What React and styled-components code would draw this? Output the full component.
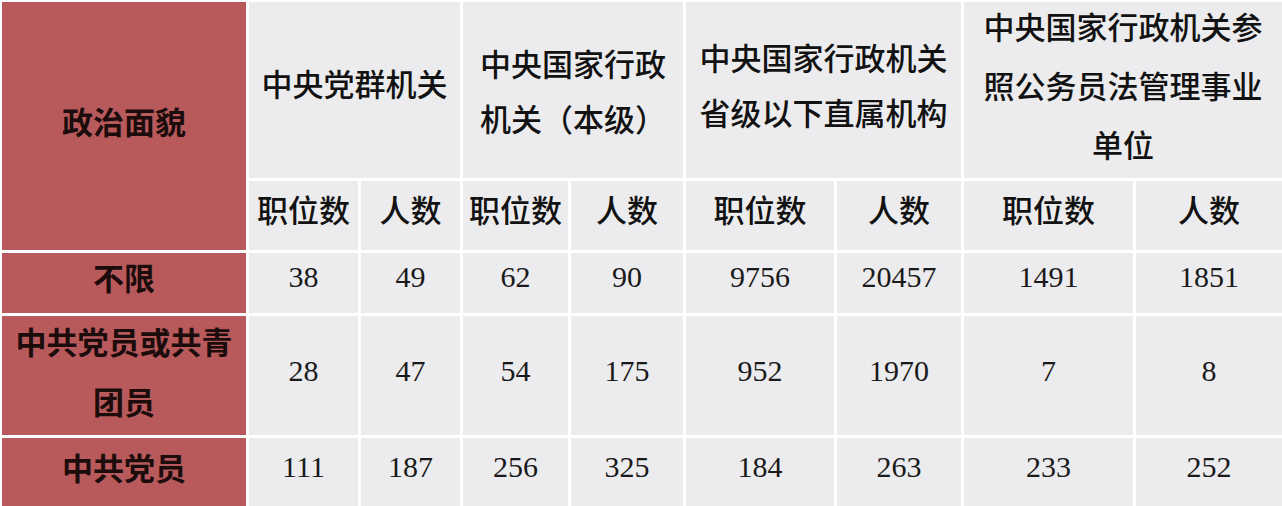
import React from "react";
import styled, { createGlobalStyle } from "styled-components";

const GlobalStyle = createGlobalStyle`
  html, body {
    margin: 0;
    padding: 0;
    background: #ffffff;
    overflow: hidden;
  }
`;

const Sheet = styled.div`
  display: grid;
  grid-template-columns: 244px 109px 99px 105px 112px 148px 124px 169px 146px;
  grid-template-rows: 176px 69px 60px 119px 70px;
  gap: 3px;
  padding: 2px 0 0 2px;
  width: 1282px;
  box-sizing: border-box;
  background: #ffffff;
  font-family: "Noto Sans CJK SC", "Noto Sans", sans-serif;
`;

const Cell = styled.div`
  display: flex;
  align-items: center;
  justify-content: center;
  text-align: center;
  box-sizing: border-box;
  overflow: visible;
  background: ${(p) => (p.$red ? "#b85a5c" : "#ececee")};
  color: ${(p) => (p.$red ? "#1c0c0c" : "#121212")};
  padding-bottom: ${(p) => p.$lift || 0}px;
`;

const Corner = styled(Cell)`
  grid-row: span 2;
  font-size: 31px;
  font-weight: 700;
  padding-bottom: 12px;
`;

const GroupHead = styled(Cell)`
  grid-column: span 2;
  font-size: 31px;
  font-weight: 500;
  line-height: ${(p) => p.$lh || 56}px;
`;

const SubHead = styled(Cell)`
  font-size: 31px;
  font-weight: 500;
  padding-bottom: 14px;
`;

const RowHead = styled(Cell)`
  font-size: 31px;
  font-weight: 700;
  line-height: 60px;
`;

const Num = styled(Cell)`
  font-family: "Liberation Serif", "DejaVu Serif", serif;
  font-size: 30px;
  color: #1a1a1a;
`;

const groups = [
  { lines: ["中央党群机关"], lift: 14 },
  { lines: ["中央国家行政", "机关（本级）"], lift: 0, lh: 55 },
  { lines: ["中央国家行政机关", "省级以下直属机构"], lift: 12, lh: 55 },
  { lines: ["中央国家行政机关参", "照公务员法管理事业", "单位"], lift: 12, lh: 59 },
];

const rows = [
  { head: ["不限"], values: [38, 49, 62, 90, 9756, 20457, 1491, 1851], lift: 12 },
  { head: ["中共党员或共青", "团员"], values: [28, 47, 54, 175, 952, 1970, 7, 8], lift: 10 },
  { head: ["中共党员"], values: [111, 187, 256, 325, 184, 263, 233, 252], lift: 12 },
];

function Lines({ lines }) {
  return (
    <div>
      {lines.map((l, i) => (
        <div key={i}>{l}</div>
      ))}
    </div>
  );
}

export default function App() {
  return (
    <>
      <GlobalStyle />
      <Sheet>
        <Corner $red>政治面貌</Corner>
        {groups.map((g, i) => (
          <GroupHead key={i} $lift={g.lift} $lh={g.lh}>
            <Lines lines={g.lines} />
          </GroupHead>
        ))}
        {groups.map((g, i) => (
          <React.Fragment key={i}>
            <SubHead>职位数</SubHead>
            <SubHead>人数</SubHead>
          </React.Fragment>
        ))}
        {rows.map((r, i) => (
          <React.Fragment key={i}>
            <RowHead $red $lift={r.lift}>
              <Lines lines={r.head} />
            </RowHead>
            {r.values.map((v, j) => (
              <Num key={j} $lift={r.lift}>
                {v}
              </Num>
            ))}
          </React.Fragment>
        ))}
      </Sheet>
    </>
  );
}
